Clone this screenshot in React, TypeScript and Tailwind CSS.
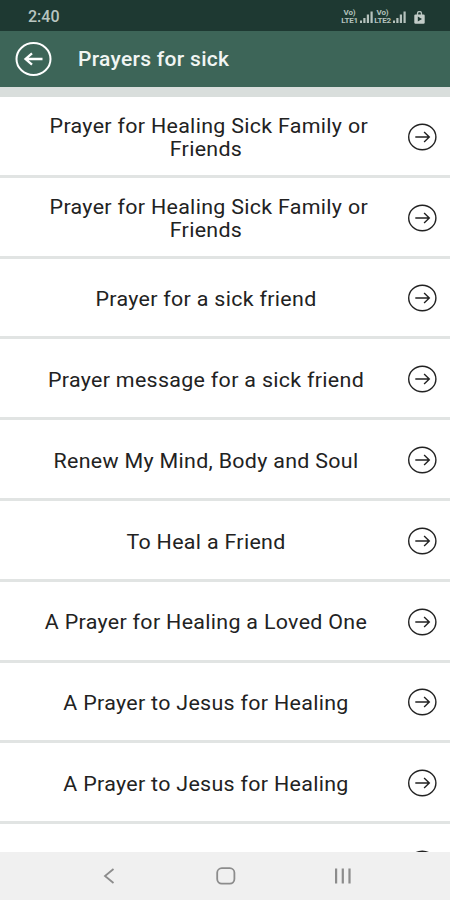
const prayers = [
  "\u00a0Prayer for Healing Sick Family or Friends",
  "\u00a0Prayer for Healing Sick Family or Friends",
  "Prayer for a sick friend",
  "Prayer message for a sick friend",
  "Renew My Mind, Body and Soul",
  "To Heal a Friend",
  "A Prayer for Healing a Loved One",
  "A Prayer to Jesus for Healing",
  "A Prayer to Jesus for Healing",
  "",
];

const SignalBars = () => (
  <svg width="13" height="12" viewBox="0 0 13 12" fill="#b5c2bd">
    <rect x="0" y="9.5" width="2" height="2.5" />
    <rect x="3.3" y="7" width="2.2" height="5" />
    <rect x="6.8" y="3.5" width="2.2" height="8.5" />
    <rect x="10.5" y="0.5" width="2.2" height="11.5" />
  </svg>
);

const Lte = ({ sim }: { sim: number }) => (
  <div className="flex w-[17px] flex-col items-center text-[8px] leading-[8px] font-bold tracking-[-0.2px] text-[#b5c2bd]">
    <span>Vo)</span>
    <span>LTE{sim}</span>
  </div>
);

const StatusBar = () => (
  <div className="flex h-[31px] shrink-0 items-center justify-between bg-[#1e3932] pt-[3px] pr-[25px] pl-[28px]">
    <span className="text-[16px] font-medium text-[#b9c5c0]">2:40</span>
    <div className="flex items-center">
      <Lte sim={1} />
      <div className="ml-[2px]">
        <SignalBars />
      </div>
      <div className="ml-[1px]">
        <Lte sim={2} />
      </div>
      <div className="ml-[2px]">
        <SignalBars />
      </div>
      <svg className="ml-[8px]" width="11" height="13" viewBox="0 0 11 13">
        <path d="M3.5 4V2.5a2 2 0 0 1 4 0V4" fill="none" stroke="#b5c2bd" strokeWidth="1.3" />
        <rect x="0.3" y="3.5" width="10.4" height="9.2" rx="1.2" fill="#c3cdc9" />
        <path d="M3.8 5.6 8 8.1 3.8 10.6z" fill="#1e3932" />
      </svg>
    </div>
  </div>
);

const Header = () => (
  <header className="flex h-[56px] shrink-0 items-center bg-[#3d6558] pl-[15px]">
    <svg width="37" height="36" viewBox="0 0 37 36" fill="none" stroke="#fff">
      <ellipse cx="18.5" cy="18" rx="17" ry="16" strokeWidth="2" />
      <path d="M27.5 18H10.5M17 12.3 10.5 18l6.5 5.7" strokeWidth="2.3" />
    </svg>
    <h1 className="ml-[26px] pt-[2px] text-[21px] font-medium tracking-[0.3px] text-[#f1f5f3]">
      Prayers for sick
    </h1>
  </header>
);

const PrayerRow = ({ title }: { title: string }) => (
  <div className="flex h-[80.8px] shrink-0 items-center border-b-[3px] border-[#e1e4e3] pr-[13px] pl-[51px]">
    <p className="w-[310px] shrink-0 scale-x-107 pt-[5px] text-center text-[20px] leading-[23.5px] tracking-[0.29px] text-[#222]">
      {title}
    </p>
    <svg
      className="mt-[2px] ml-auto shrink-0"
      width="30"
      height="28"
      viewBox="0 0 30 28"
      fill="none"
      stroke="#222"
    >
      <ellipse cx="15.3" cy="14" rx="13.6" ry="12.8" strokeWidth="1.4" />
      <path d="M8.3 14h13.5M17.1 8.9 22.3 14l-5.2 5.1" strokeWidth="1.4" />
    </svg>
  </div>
);

const NavBar = () => (
  <nav className="flex h-[48px] shrink-0 items-center bg-[#f0f0f0] pl-[103px] text-[#8c8c8c]">
    <svg width="12" height="18" viewBox="0 0 12 18" fill="none" stroke="currentColor" strokeWidth="1.8">
      <path d="M10.5 2 2 9l8.5 7" />
    </svg>
    <svg className="ml-[101px]" width="20" height="18" viewBox="0 0 20 18" fill="none" stroke="currentColor" strokeWidth="1.8">
      <rect x="1.2" y="1.2" width="17.2" height="15.4" rx="4.6" />
    </svg>
    <svg className="ml-[98px]" width="18" height="16" viewBox="0 0 18 16" fill="currentColor">
      <rect x="1" y="0.5" width="2.2" height="15" />
      <rect x="7.7" y="0.5" width="2.2" height="15" />
      <rect x="14.4" y="0.5" width="2.2" height="15" />
    </svg>
  </nav>
);

const App = () => {
  return (
    <div className="flex h-[900px] w-[450px] flex-col overflow-hidden bg-white font-['Roboto',sans-serif]">
      <StatusBar />
      <Header />
      <div className="h-[10px] shrink-0 bg-[#d9dedc]" />
      <main className="flex min-h-0 flex-1 flex-col overflow-hidden">
        {prayers.map((title, id) => (
          <PrayerRow title={title} key={id} />
        ))}
      </main>
      <NavBar />
    </div>
  );
};

export default App;
